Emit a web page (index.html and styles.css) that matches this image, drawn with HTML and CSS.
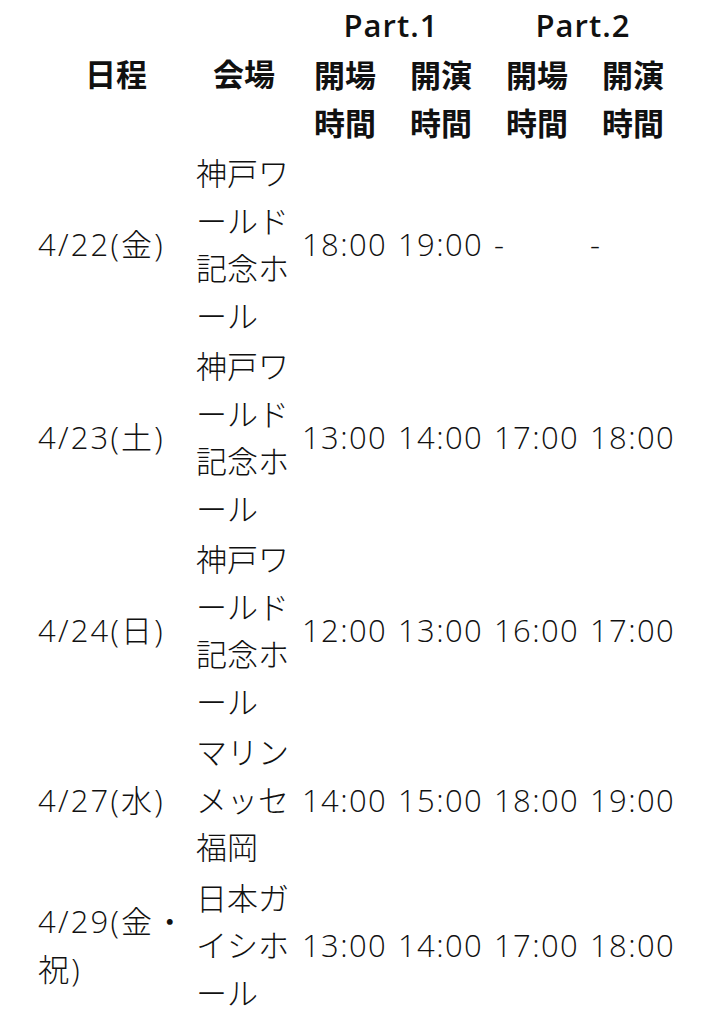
FILE: index.html
```html
<!DOCTYPE html>
<html lang="ja">
<head>
<meta charset="utf-8">
<title>公演スケジュール</title>
<link rel="stylesheet" href="styles.css">
</head>
<body>
<table class="schedule">
  <colgroup>
    <col class="c-date">
    <col class="c-venue">
    <col class="c-time">
    <col class="c-time">
    <col class="c-time">
    <col class="c-time">
  </colgroup>
  <thead>
    <tr>
      <th class="h-date" rowspan="2">日程</th>
      <th class="h-venue" rowspan="2">会場</th>
      <th class="part" colspan="2">Part.1</th>
      <th class="part" colspan="2">Part.2</th>
    </tr>
    <tr>
      <th class="h-time">開場時間</th>
      <th class="h-time">開演時間</th>
      <th class="h-time">開場時間</th>
      <th class="h-time">開演時間</th>
    </tr>
  </thead>
  <tbody>
    <tr>
      <td class="date">4/22(金)</td>
      <td class="venue">神戸ワールド記念ホール</td>
      <td class="time">18:00</td>
      <td class="time">19:00</td>
      <td class="time">-</td>
      <td class="time">-</td>
    </tr>
    <tr>
      <td class="date">4/23(土)</td>
      <td class="venue">神戸ワールド記念ホール</td>
      <td class="time">13:00</td>
      <td class="time">14:00</td>
      <td class="time">17:00</td>
      <td class="time">18:00</td>
    </tr>
    <tr>
      <td class="date">4/24(日)</td>
      <td class="venue">神戸ワールド記念ホール</td>
      <td class="time">12:00</td>
      <td class="time">13:00</td>
      <td class="time">16:00</td>
      <td class="time">17:00</td>
    </tr>
    <tr>
      <td class="date">4/27(水)</td>
      <td class="venue">マリンメッセ福岡</td>
      <td class="time">14:00</td>
      <td class="time">15:00</td>
      <td class="time">18:00</td>
      <td class="time">19:00</td>
    </tr>
    <tr>
      <td class="date">4/29(金・祝)</td>
      <td class="venue">日本ガイシホール</td>
      <td class="time">13:00</td>
      <td class="time">14:00</td>
      <td class="time">17:00</td>
      <td class="time">18:00</td>
    </tr>
  </tbody>
</table>
</body>
</html>
```
FILE: styles.css
```css
html, body {
  margin: 0;
  padding: 0;
  background: #ffffff;
}

body {
  color: #111111;
  font-family: "Open Sans", "Noto Sans CJK JP", sans-serif;
  font-size: 31px;
  line-height: 47.5px;
}

.schedule {
  table-layout: fixed;
  width: 686px;
  border-collapse: separate;
  border-spacing: 0;
}

.c-date { width: 196px; }
.c-venue { width: 106px; }
.c-time { width: 96px; }

.schedule th,
.schedule td {
  padding: 1.5px 10px 1.5px 0;
  vertical-align: middle;
  line-height: 47.5px;
}

.schedule th {
  font-weight: 700;
  text-align: center;
}

.schedule .part {
  font-weight: 600;
  letter-spacing: 1px;
  padding-right: 14px;
}

.schedule td {
  font-weight: 300;
  text-align: left;
}

.schedule .h-date,
.schedule .date {
  padding-left: 38px;
  padding-right: 2px;
}

.date {
  letter-spacing: 2.2px;
}

.time {
  letter-spacing: 1.4px;
  white-space: nowrap;
}
```
